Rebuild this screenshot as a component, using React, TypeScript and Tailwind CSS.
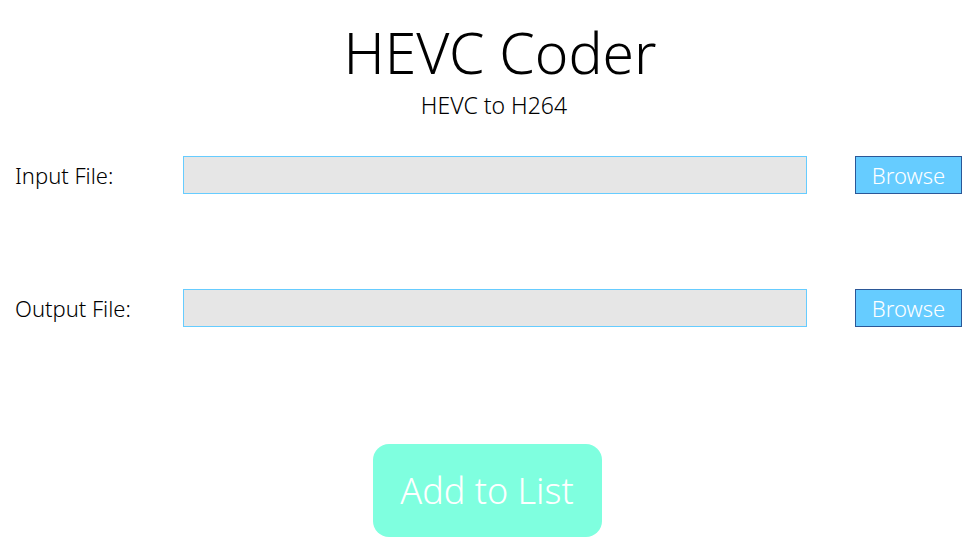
import React from 'react'

const font = { fontFamily: '"Noto Sans", "Open Sans", sans-serif' }

function FileRow({ label }: { label: string }) {
  return (
    <div className="flex items-center h-[38px]">
      <span className="w-[183px] pl-[15px] text-[22px] font-light text-black">{label}</span>
      <div className="w-[624px] h-full bg-[#e6e6e6] border border-[#66ccff]" />
      <button className="ml-[48px] w-[107px] h-full bg-[#66ccff] border border-[#2b5797] text-white text-[22px] font-light leading-none">
        Browse
      </button>
    </div>
  )
}

export default function App() {
  return (
    <div className="w-[962px] h-[539px] bg-white overflow-hidden" style={font}>
      <div className="flex flex-col items-center pt-[22px]">
        <h1 className="ml-[38px] text-[57px] font-light leading-[60px] text-black">HEVC Coder</h1>
        <p className="ml-[26px] mt-[8px] text-[23px] font-light leading-[30px] text-black">HEVC to H264</p>
      </div>
      <div className="mt-[36px] flex flex-col gap-[95px]">
        <FileRow label="Input File:" />
        <FileRow label="Output File:" />
      </div>
      <div className="mt-[117px] flex justify-center">
        <button className="ml-[12px] w-[229px] h-[93px] rounded-[16px] bg-[#7fffdf] text-white text-[36px] font-light">
          Add to List
        </button>
      </div>
    </div>
  )
}
